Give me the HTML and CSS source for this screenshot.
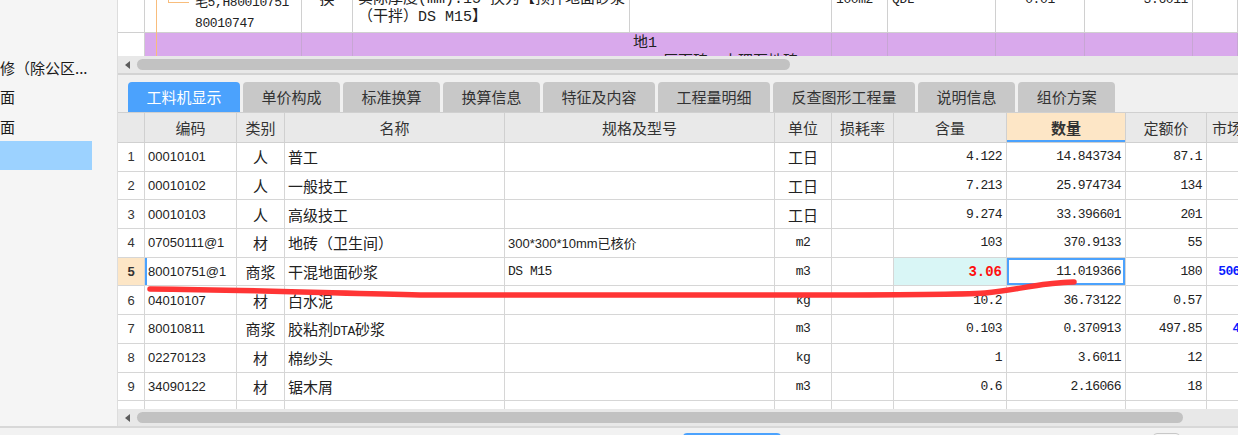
FILE: index.html
```html
<!DOCTYPE html>
<html lang="zh-CN">
<head>
<meta charset="utf-8">
<title>工料机显示</title>
<link rel="stylesheet" href="styles.css">
</head>
<body>
<div class="app">
  <div class="top">
    <aside class="side">
      <div class="side-item">修（除公区...</div>
      <div class="side-item">面</div>
      <div class="side-item">面</div>
      <div class="side-item sel"></div>
    </aside>
    <main class="main">
      <div class="upper">
        <div class="urow u1">
          <div class="uc c0"></div>
          <div class="uc c1 tree-end"><span class="utext mono">毛5,H80010751<br>80010747</span></div>
          <div class="uc c2 ctr">换</div>
          <div class="uc c3 mixed">实际厚度(mm):15 换为【预拌地面砂浆<br>（干拌）DS M15】</div>
          <div class="uc c4"></div>
          <div class="uc c5 mono">100m2</div>
          <div class="uc c6 mono">QDL</div>
          <div class="uc c7 mono ctr">0.01</div>
          <div class="uc c8 mono right">3.6011</div>
          <div class="uc c9"></div>
        </div>
        <div class="urow u2">
          <div class="uc c0"></div>
          <div class="uc c1 tree-line"></div>
          <div class="uc c2"></div>
          <div class="uc c3 open"></div>
          <div class="uc c4 mixed">地1<br>　　厚面砖、大理石地砖</div>
          <div class="uc c5"></div>
          <div class="uc c6"></div>
          <div class="uc c7"></div>
          <div class="uc c8"></div>
          <div class="uc c9"></div>
        </div>
      </div>
      <div class="hscroll"><span class="arrow"></span><span class="thumb thumb-top"></span></div>
      <div class="sep"></div>
      <nav class="tabs">
        <div class="tab active">工料机显示</div>
        <div class="tab">单价构成</div>
        <div class="tab">标准换算</div>
        <div class="tab">换算信息</div>
        <div class="tab">特征及内容</div>
        <div class="tab">工程量明细</div>
        <div class="tab">反查图形工程量</div>
        <div class="tab">说明信息</div>
        <div class="tab">组价方案</div>
      </nav>
      <div class="grid">
        <div class="row head">
          <div class="cell"></div>
          <div class="cell hc">编码</div>
          <div class="cell hc">类别</div>
          <div class="cell hc">名称</div>
          <div class="cell hc">规格及型号</div>
          <div class="cell hc">单位</div>
          <div class="cell hc">损耗率</div>
          <div class="cell hc">含量</div>
          <div class="cell hc hsel">数量</div>
          <div class="cell hc">定额价</div>
          <div class="cell hm">市场价</div>
        </div>
        <div class="row">
          <div class="cell idx">1</div><div class="cell code">00010101</div><div class="cell ctr">人</div><div class="cell">普工</div><div class="cell"></div><div class="cell ctr">工日</div><div class="cell"></div><div class="cell num">4.122</div><div class="cell num">14.843734</div><div class="cell num">87.1</div><div class="cell num"></div>
        </div>
        <div class="row">
          <div class="cell idx">2</div><div class="cell code">00010102</div><div class="cell ctr">人</div><div class="cell">一般技工</div><div class="cell"></div><div class="cell ctr">工日</div><div class="cell"></div><div class="cell num">7.213</div><div class="cell num">25.974734</div><div class="cell num">134</div><div class="cell num"></div>
        </div>
        <div class="row">
          <div class="cell idx">3</div><div class="cell code">00010103</div><div class="cell ctr">人</div><div class="cell">高级技工</div><div class="cell"></div><div class="cell ctr">工日</div><div class="cell"></div><div class="cell num">9.274</div><div class="cell num">33.396601</div><div class="cell num">201</div><div class="cell num"></div>
        </div>
        <div class="row">
          <div class="cell idx">4</div><div class="cell code">07050111@1</div><div class="cell ctr">材</div><div class="cell">地砖（卫生间）</div><div class="cell code">300*300*10mm已核价</div><div class="cell ctr unit">m2</div><div class="cell"></div><div class="cell num">103</div><div class="cell num">370.9133</div><div class="cell num">55</div><div class="cell num"></div>
        </div>
        <div class="row cur">
          <div class="cell idx">5</div><div class="cell code mark">80010751@1</div><div class="cell ctr">商浆</div><div class="cell">干混地面砂浆</div><div class="cell mixed small">DS M15</div><div class="cell ctr unit">m3</div><div class="cell"></div><div class="cell num hl">3.06</div><div class="cell num picked">11.019366</div><div class="cell num">180</div><div class="cell num blue">5066.6667</div>
        </div>
        <div class="row">
          <div class="cell idx">6</div><div class="cell code">04010107</div><div class="cell ctr">材</div><div class="cell">白水泥</div><div class="cell"></div><div class="cell ctr unit">kg</div><div class="cell"></div><div class="cell num">10.2</div><div class="cell num">36.73122</div><div class="cell num">0.57</div><div class="cell num"></div>
        </div>
        <div class="row">
          <div class="cell idx">7</div><div class="cell code">80010811</div><div class="cell ctr">商浆</div><div class="cell mixed"><span>胶粘剂<span class="latin">DTA</span>砂浆</span></div><div class="cell"></div><div class="cell ctr unit">m3</div><div class="cell"></div><div class="cell num">0.103</div><div class="cell num">0.370913</div><div class="cell num">497.85</div><div class="cell num blue">497.850</div>
        </div>
        <div class="row">
          <div class="cell idx">8</div><div class="cell code">02270123</div><div class="cell ctr">材</div><div class="cell">棉纱头</div><div class="cell"></div><div class="cell ctr unit">kg</div><div class="cell"></div><div class="cell num">1</div><div class="cell num">3.6011</div><div class="cell num">12</div><div class="cell num"></div>
        </div>
        <div class="row">
          <div class="cell idx">9</div><div class="cell code">34090122</div><div class="cell ctr">材</div><div class="cell">锯木屑</div><div class="cell"></div><div class="cell ctr unit">m3</div><div class="cell"></div><div class="cell num">0.6</div><div class="cell num">2.16066</div><div class="cell num">18</div><div class="cell num"></div>
        </div>
        <div class="row">
          <div class="cell idx">10</div><div class="cell code">34110117</div><div class="cell ctr">材</div><div class="cell">水</div><div class="cell"></div><div class="cell ctr unit">m3</div><div class="cell"></div><div class="cell num">0.3</div><div class="cell num">1.08033</div><div class="cell num">4.27</div><div class="cell num"></div>
        </div>
      </div>
      <div class="hscroll"><span class="arrow"></span><span class="thumb thumb-bottom"></span></div>
    </main>
  </div>
  <div class="status"><span class="sbtn primary"></span><span class="sbtn plain"></span></div>
  <svg class="scribble" width="1238" height="435" viewBox="0 0 1238 435" aria-hidden="true">
    <path d="M150 289 C 250 290, 330 293, 420 295 L 800 295 C 900 295, 955 295, 985 293 C 1010 291, 1028 286, 1048 284 C 1060 283, 1068 282, 1074 282" fill="none" stroke="#ff3535" stroke-width="5.5" stroke-linecap="round" stroke-linejoin="round"/>
  </svg>
</div>
</body>
</html>
```

FILE: styles.css
```css
* { box-sizing: border-box; }

html, body {
  margin: 0;
  padding: 0;
}

body {
  width: 1238px;
  height: 435px;
  overflow: hidden;
  background: #f0f0f0;
  font-family: "Noto Sans CJK SC", "Noto Sans", sans-serif;
  color: #222;
}

.app {
  position: relative;
  width: 1238px;
  height: 435px;
  display: flex;
  flex-direction: column;
}

.top {
  display: flex;
  height: 426px;
  flex-shrink: 0;
}

/* left tree panel */
.side {
  width: 118px;
  flex-shrink: 0;
  background: #f5f5f5;
  border-right: 1px solid #dddddd;
  padding-top: 53px;
}

.side-item {
  height: 29.33px;
  line-height: 29px;
  font-size: 15px;
  color: #1a1a1a;
  white-space: nowrap;
  overflow: hidden;
}

.side-item.sel {
  width: 92px;
  background: #9cd2ff;
}

/* main column */
.main {
  flex: 1;
  min-width: 0;
  display: flex;
  flex-direction: column;
  background: #fff;
  overflow: hidden;
}

.upper {
  height: 56px;
  flex-shrink: 0;
  overflow: hidden;
  display: flex;
  flex-direction: column;
  justify-content: flex-end;
}

.urow {
  display: grid;
  grid-template-columns: 27px 157px 51px 277px 202px 56px 108px 89px 108px 1fr;
  flex-shrink: 0;
}

.uc {
  border-right: 1px solid #d0d0d0;
  font-size: 15px;
  white-space: nowrap;
}

.u1 {
  height: 51px;
  border-bottom: 1px solid #d0d0d0;
}

.u1 .uc {
  padding: 9px 4px 0;
  line-height: 18px;
}

.u1 .c2 { padding-top: 7px; }
.u1 .c3 { padding-left: 5px; }

.u2 {
  height: 23px;
}

.u2 .uc {
  background-color: #d9a9ec;
  border-right-color: #c7a6d4;
  line-height: 19px;
  padding-top: 1px;
}

.u2 .c0 { background-color: #fff; border-right-color: #d0d0d0; }
.u2 .c3.open { border-right-color: #d9a9ec; }
.u2 .c4 { padding-left: 3px; }

.tree-end {
  background-image:
    linear-gradient(#f8bd7c, #f8bd7c),
    linear-gradient(#f8bd7c, #f8bd7c),
    linear-gradient(#f8bd7c, #f8bd7c);
  background-repeat: no-repeat;
  background-size: 1px 100%, 1px 21px, 21px 1px;
  background-position: 11px 0, 23px 0, 23px 20px;
}

.tree-line {
  background-image: linear-gradient(#f8bd7c, #f8bd7c);
  background-repeat: no-repeat;
  background-size: 1px 100%;
  background-position: 11px 0;
}

.u1 .c1 { padding-left: 50px; }

.mono {
  font-family: "Liberation Mono", "Noto Sans CJK SC", monospace;
  font-size: 13px;
  letter-spacing: -0.4px;
}

.mixed {
  font-family: "Liberation Mono", "Noto Sans CJK SC", monospace;
}

.mixed .latin,
.mixed.small {
  font-size: 13px;
  letter-spacing: -0.5px;
}

.ctr { text-align: center; justify-content: center; }
.right { text-align: right; }

/* scrollbars */
.hscroll {
  height: 17px;
  flex-shrink: 0;
  background: #e8e8e8;
  display: flex;
  align-items: center;
  padding-left: 7px;
}

.arrow {
  width: 0;
  height: 0;
  border-style: solid;
  border-width: 4px 5px 4px 0;
  border-color: transparent #5c5c5c transparent transparent;
}

.thumb {
  height: 11px;
  margin-left: 7px;
  border-radius: 6px;
  background: #c2c2c2;
}

.thumb-top { width: 653px; }
.thumb-bottom { width: 1046px; }

.sep {
  height: 2px;
  flex-shrink: 0;
  background: #d3d3d3;
}

/* tabs */
.tabs {
  height: 37px;
  flex-shrink: 0;
  background: #f0f0f0;
  display: flex;
  align-items: flex-end;
  gap: 3px;
  padding-left: 10px;
}

.tab {
  height: 30px;
  padding: 0 18.5px;
  background: #c8c8c8;
  border-radius: 4px 4px 0 0;
  font-size: 15px;
  line-height: 30px;
  color: #333;
  white-space: nowrap;
}

.tab.active {
  background: #4ba2fd;
  color: #fff;
}

/* grid */
.grid {
  height: 297px;
  flex-shrink: 0;
  border-top: 1px solid #d0d0d0;
  overflow: hidden;
  background: #fff;
}

.row {
  display: grid;
  grid-template-columns: 27px 92px 48px 220px 270px 57px 62px 113px 119px 81px 81px;
  height: 28.7px;
  border-bottom: 1px solid #d6d6d6;
}

.row.head {
  height: 30px;
  background: #e9e9e9;
  border-bottom-color: #d0d0d0;
}

.cell {
  display: flex;
  align-items: center;
  padding: 0 3px;
  border-right: 1px solid #d6d6d6;
  white-space: nowrap;
  overflow: hidden;
  font-size: 15px;
  color: #222;
}

.head .cell {
  color: #333;
  border-right-color: #d0d0d0;
}

.hc { justify-content: center; }
.hm { padding-left: 5px; }

.hsel {
  background: #fde6c6;
  font-weight: bold;
  box-shadow: inset 0 -2px 0 #4ba2fd;
}

.idx {
  justify-content: center;
  font-family: "Liberation Sans", sans-serif;
  font-size: 13px;
  color: #333;
}

.code {
  font-family: "Liberation Sans", "Noto Sans CJK SC", sans-serif;
  font-size: 13px;
}

.unit {
  font-family: "Liberation Mono", monospace;
  font-size: 13px;
  letter-spacing: -0.6px;
}

.num {
  justify-content: flex-end;
  padding-right: 4px;
  font-family: "Liberation Mono", monospace;
  font-size: 13px;
  letter-spacing: -0.6px;
}

.cur .idx {
  background: #fde6c6;
  font-weight: bold;
}

.code.mark {
  box-shadow: inset 2px 0 0 #4ba2fd;
}

.hl {
  background: #d9f6f6;
  color: #ff1010;
  font-weight: bold;
  font-size: 14px;
  letter-spacing: 0;
}

.picked {
  box-shadow: inset 0 0 0 2px #4ba2fd;
}

.blue {
  color: #0a1cff;
  font-weight: bold;
  justify-content: flex-end;
}

/* bottom status strip */
.status {
  height: 9px;
  flex-shrink: 0;
  border-top: 2px solid #d8d8d8;
  background: #f2f2f2;
  display: flex;
  align-items: flex-start;
  gap: 372px;
  padding: 5px 0 0 683px;
  overflow: hidden;
}

.sbtn {
  height: 10px;
  border-radius: 4px 4px 0 0;
  flex-shrink: 0;
}

.sbtn.primary { width: 98px; background: #4ba2fd; }
.sbtn.plain { width: 27px; border: 1px solid #c8c8c8; background: #f7f7f7; }

.scribble {
  position: absolute;
  top: 0;
  left: 0;
  pointer-events: none;
}
```
